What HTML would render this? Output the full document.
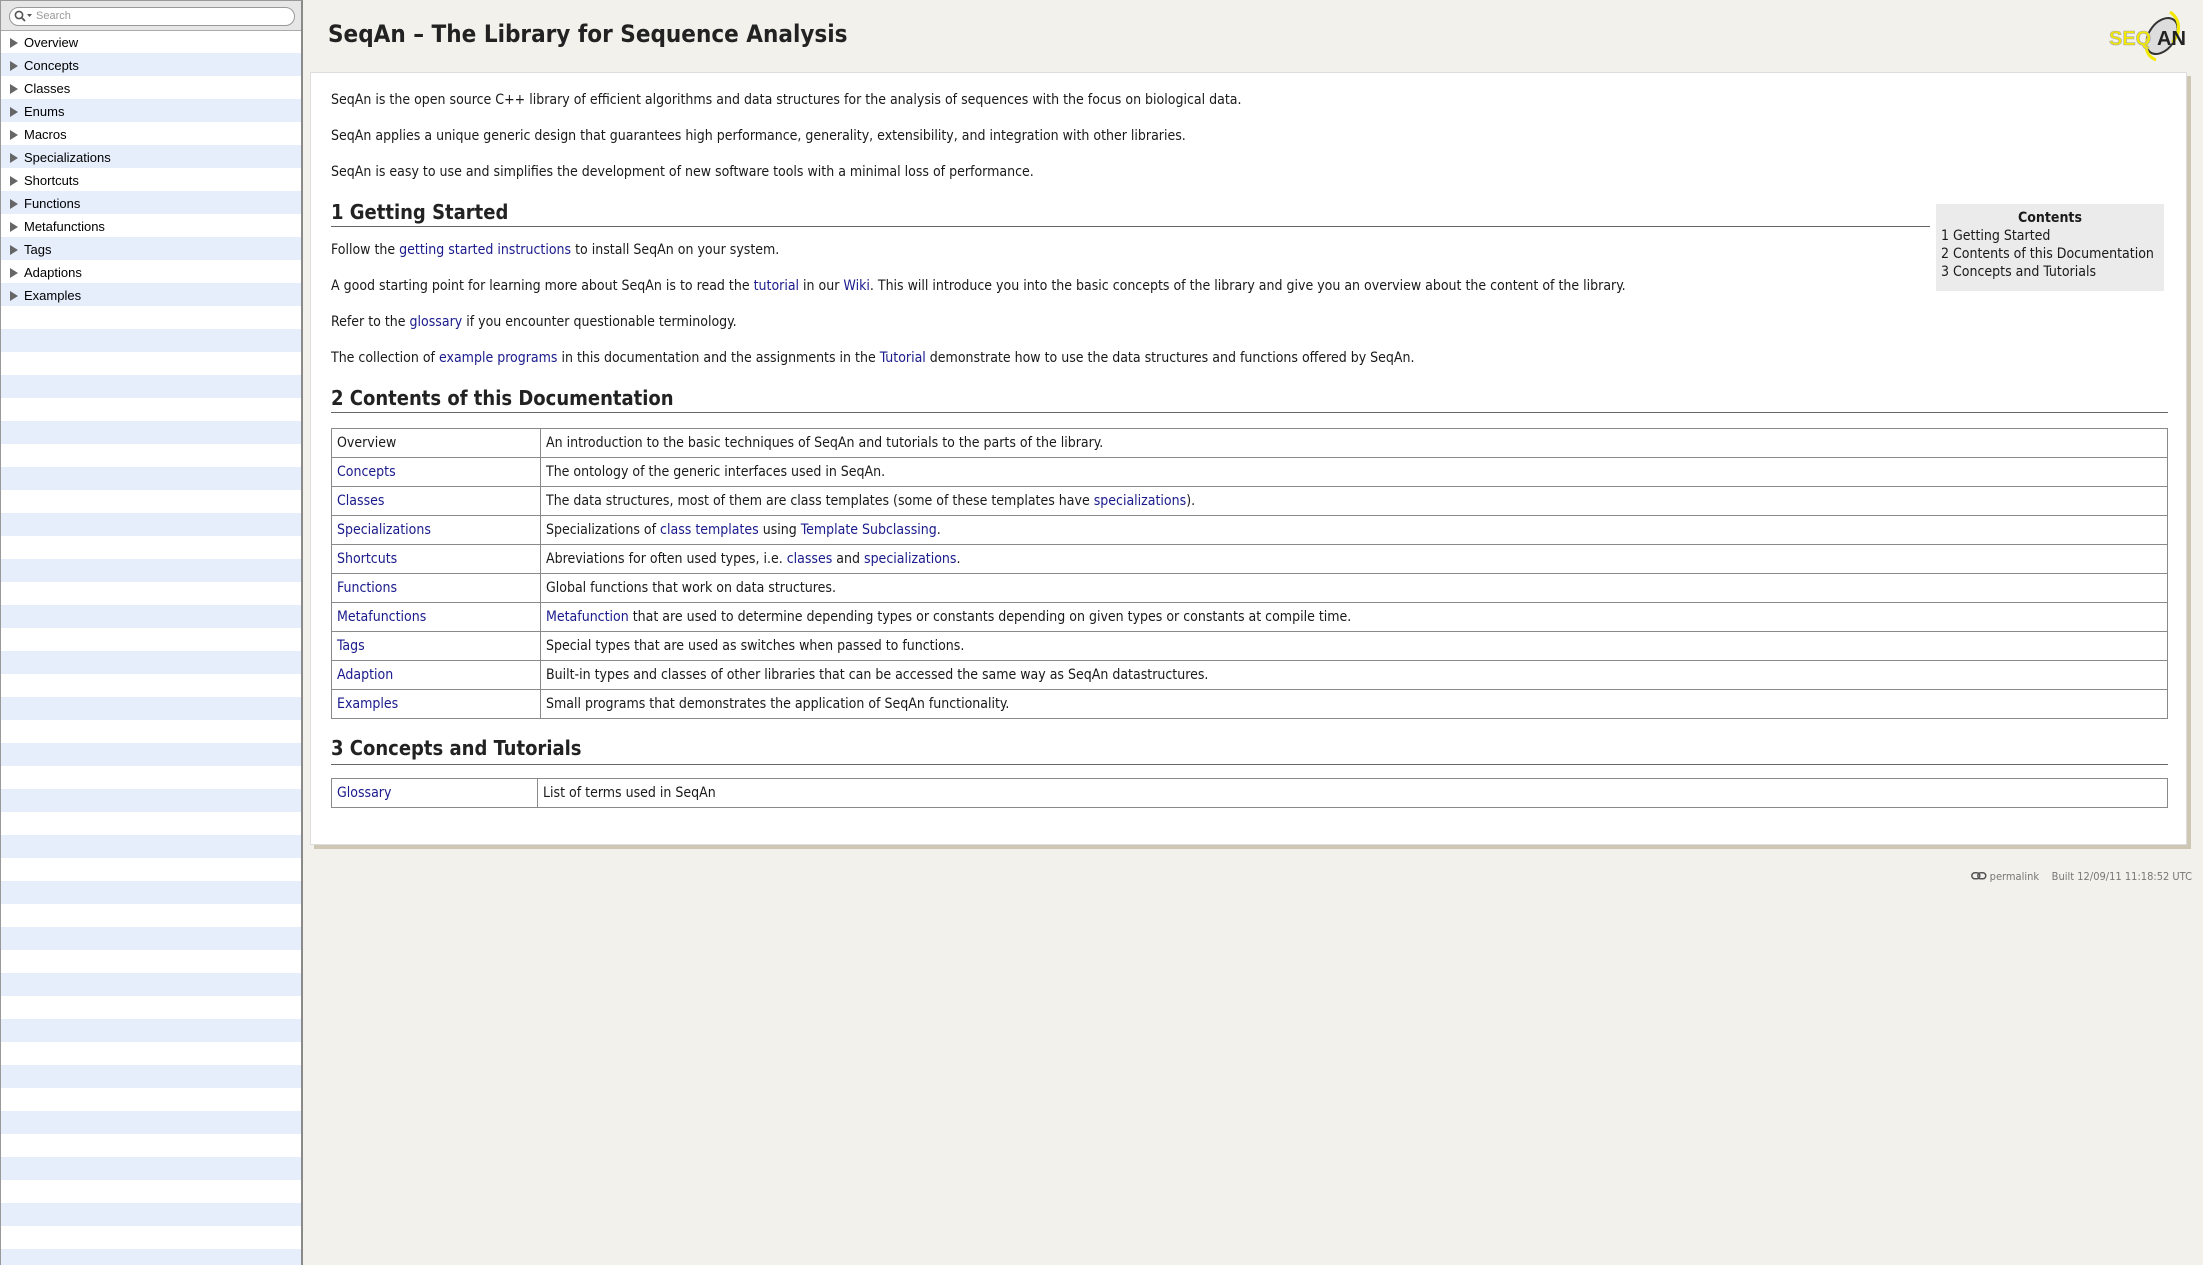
<!DOCTYPE html>
<html><head><meta charset="utf-8"><style>
*{margin:0;padding:0;box-sizing:border-box}
html,body{width:2203px;height:1265px;overflow:hidden;background:#f2f1eb;font-family:"DejaVu Sans Condensed","DejaVu Sans",sans-serif;color:#1a1a1a}
#side{position:absolute;left:0;top:0;width:303px;height:1265px;border-right:2px solid #8a8a8a;border-left:1px solid #999;border-top:1px solid #999;background:repeating-linear-gradient(#fff 0 23px,#e6edfb 23px 46px);background-position:0 29px}
#sbar{position:absolute;left:0;top:0;width:300px;height:30px;background:#e6e6e6;border-bottom:1px solid #aaa}
#sbox{position:absolute;left:8px;top:6px;width:286px;height:19px;border:1px solid #999;border-radius:10px;background:#fff;font:11px "Liberation Sans",sans-serif;line-height:17px;color:#999;padding-left:26px}
.it{position:absolute;left:0;height:23px;font:13px "Liberation Sans",sans-serif;line-height:23px;color:#000;padding-left:23px;width:300px}
.it:before{content:"";position:absolute;left:9px;top:7px;border-left:8px solid #666;border-top:5px solid transparent;border-bottom:5px solid transparent}
#title{position:absolute;left:328px;top:20px;font-weight:bold;font-size:24px;color:#222;white-space:nowrap}
#panel{position:absolute;left:310px;top:72px;width:1877px;height:773px;background:#fff;border:1px solid #ddd;box-shadow:4px 4px 0 #cdc7b3}
.p{position:absolute;left:331px;font-size:14px;white-space:nowrap;line-height:18px}
a{color:#1a1a8c;text-decoration:none}
.h{position:absolute;left:331px;font-weight:bold;font-size:20px;white-space:nowrap;line-height:24px;color:#222}
.rule{position:absolute;left:331px;height:1px;background:#666}
table{position:absolute;border-collapse:collapse;font-size:14px}
td{border:1px solid #8a8a8a;height:29px;padding:0 5px;white-space:nowrap}
#toc{position:absolute;left:1936px;top:204px;width:228px;height:87px;background:#ebebeb;font-size:14px;padding:5px 5px;line-height:18px}
#foot{position:absolute;right:11px;top:870px;font-size:11px;color:#777;white-space:nowrap}
</style></head><body>
<div id="side">
<div id="sbar"><div id="sbox">Search</div>
<svg style="position:absolute;left:13px;top:9px" width="20" height="13"><circle cx="5" cy="5" r="3.6" fill="none" stroke="#555" stroke-width="1.6"/><path d="M8 8l3 3" stroke="#555" stroke-width="1.8"/><path d="M13 4h5l-2.5 3z" fill="#555"/></svg></div>
<div class="it" style="top:30px">Overview</div>
<div class="it" style="top:53px">Concepts</div>
<div class="it" style="top:76px">Classes</div>
<div class="it" style="top:99px">Enums</div>
<div class="it" style="top:122px">Macros</div>
<div class="it" style="top:145px">Specializations</div>
<div class="it" style="top:168px">Shortcuts</div>
<div class="it" style="top:191px">Functions</div>
<div class="it" style="top:214px">Metafunctions</div>
<div class="it" style="top:237px">Tags</div>
<div class="it" style="top:260px">Adaptions</div>
<div class="it" style="top:283px">Examples</div>
</div>
<div id="title">SeqAn – The Library for Sequence Analysis</div>
<svg style="position:absolute;left:2108px;top:10px" width="80" height="52" viewBox="0 0 80 52">
<ellipse cx="54" cy="26" rx="13" ry="20" fill="#ddd" stroke="#333" stroke-width="2" transform="rotate(35 54 26)"/>
<path d="M62 2c12 8 10 24 2 30M48 50c-10-4-12-14-8-22" fill="none" stroke="#f2e800" stroke-width="3"/>
<text x="1" y="35" font-family="Liberation Sans" font-weight="bold" font-size="20" fill="#f2e800" stroke="#aaa" stroke-width="0.6">SEQ</text>
<text x="49" y="35" font-family="Liberation Sans" font-weight="bold" font-size="20" fill="#222">AN</text>
</svg>
<div id="panel"></div>
<div class="p" style="top:91px">SeqAn is the open source C++ library of efficient algorithms and data structures for the analysis of sequences with the focus on biological data.</div>
<div class="p" style="top:127px">SeqAn applies a unique generic design that guarantees high performance, generality, extensibility, and integration with other libraries.</div>
<div class="p" style="top:163px">SeqAn is easy to use and simplifies the development of new software tools with a minimal loss of performance.</div>
<div class="h" style="top:200px">1 Getting Started</div>
<div class="rule" style="top:226px;width:1599px"></div>
<div class="p" style="top:241px">Follow the <a>getting started instructions</a> to install SeqAn on your system.</div>
<div class="p" style="top:277px">A good starting point for learning more about SeqAn is to read the <a>tutorial</a> in our <a>Wiki</a>. This will introduce you into the basic concepts of the library and give you an overview about the content of the library.</div>
<div class="p" style="top:313px">Refer to the <a>glossary</a> if you encounter questionable terminology.</div>
<div class="p" style="top:349px">The collection of <a>example programs</a> in this documentation and the assignments in the <a>Tutorial</a> demonstrate how to use the data structures and functions offered by SeqAn.</div>
<div id="toc"><div style="text-align:center;font-weight:bold">Contents</div>1 Getting Started<br>2 Contents of this Documentation<br>3 Concepts and Tutorials</div>
<div class="h" style="top:386px">2 Contents of this Documentation</div>
<div class="rule" style="top:412px;width:1837px"></div>
<table style="left:331px;top:428px;width:1837px">
<tr><td style="width:209px">Overview</td><td>An introduction to the basic techniques of SeqAn and tutorials to the parts of the library.</td></tr>
<tr><td><a>Concepts</a></td><td>The ontology of the generic interfaces used in SeqAn.</td></tr>
<tr><td><a>Classes</a></td><td>The data structures, most of them are class templates (some of these templates have <a>specializations</a>).</td></tr>
<tr><td><a>Specializations</a></td><td>Specializations of <a>class templates</a> using <a>Template Subclassing</a>.</td></tr>
<tr><td><a>Shortcuts</a></td><td>Abreviations for often used types, i.e. <a>classes</a> and <a>specializations</a>.</td></tr>
<tr><td><a>Functions</a></td><td>Global functions that work on data structures.</td></tr>
<tr><td><a>Metafunctions</a></td><td><a>Metafunction</a> that are used to determine depending types or constants depending on given types or constants at compile time.</td></tr>
<tr><td><a>Tags</a></td><td>Special types that are used as switches when passed to functions.</td></tr>
<tr><td><a>Adaption</a></td><td>Built-in types and classes of other libraries that can be accessed the same way as SeqAn datastructures.</td></tr>
<tr><td><a>Examples</a></td><td>Small programs that demonstrates the application of SeqAn functionality.</td></tr>
</table>
<div class="h" style="top:736px">3 Concepts and Tutorials</div>
<div class="rule" style="top:764px;width:1837px"></div>
<table style="left:331px;top:778px;width:1837px">
<tr><td style="width:206px"><a>Glossary</a></td><td>List of terms used in SeqAn</td></tr>
</table>
<div id="foot"><svg width="16" height="8" style="vertical-align:0"><rect x="0.8" y="0.8" width="8" height="6" rx="3" fill="none" stroke="#555" stroke-width="1.5"/><rect x="6.8" y="0.8" width="8" height="6" rx="3" fill="none" stroke="#555" stroke-width="1.5"/></svg> permalink &nbsp;&nbsp;&nbsp;Built 12/09/11 11:18:52 UTC</div>
</body></html>
